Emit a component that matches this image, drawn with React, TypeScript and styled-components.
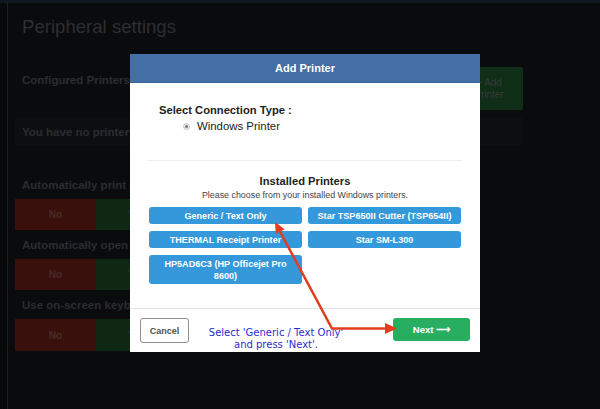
import React from "react";
import styled, { createGlobalStyle } from "styled-components";

const GlobalStyle = createGlobalStyle`
  html, body { margin: 0; padding: 0; background: #0a0b0d; }
  * { box-sizing: border-box; }
`;

const Page = styled.div`
  position: relative;
  width: 600px;
  height: 409px;
  overflow: hidden;
  background: #0a0b0d;
  font-family: "Liberation Sans", Arial, sans-serif;
  display: flex;
  flex-direction: column;
`;

const TopStrip = styled.div`
  height: 3px;
  background: #101822;
  flex: none;
`;

const Main = styled.div`
  flex: 1;
  display: flex;
`;

const Sidebar = styled.div`
  width: 8px;
  flex: none;
  background: #08090b;
  border-right: 1px solid #1c1f23;
`;

const Content = styled.div`
  width: 515px;
  flex: none;
  padding: 13px 0 0 7px;
  display: flex;
  flex-direction: column;
`;

const Title = styled.h1`
  margin: 0;
  padding-left: 7px;
  font-size: 18.6px;
  line-height: 22px;
  font-weight: normal;
  color: #2c2f33;
  white-space: nowrap;
`;

const ConfiguredRow = styled.div`
  margin-top: 29px;
  height: 43px;
  display: flex;
  justify-content: space-between;
  align-items: flex-start;
`;

const DimLabel = styled.div`
  padding-left: 7px;
  font-size: 11.5px;
  font-weight: bold;
  color: #2a2d31;
  white-space: nowrap;
`;

const ConfiguredLabel = styled(DimLabel)`
  padding-top: 7px;
`;

const AddButton = styled.div`
  width: 76px;
  height: 43px;
  background: #0f2d17;
  border-radius: 2px;
  color: #363b39;
  font-size: 10px;
  line-height: 12px;
  display: flex;
  align-items: center;
  justify-content: center;
  text-align: center;
  padding-left: 8px;
`;

const EmptyBox = styled.div`
  margin-top: 8px;
  height: 27px;
  background: #0d0e10;
  display: flex;
  align-items: center;
`;

const SectionLabel = styled(DimLabel)`
  height: 29px;
  display: flex;
  align-items: center;
`;

const FirstSectionLabel = styled(SectionLabel)`
  margin-top: 25px;
`;

const ToggleRow = styled.div<{ $h: number }>`
  display: flex;
  height: ${(p) => p.$h}px;
`;

const Toggle = styled.div<{ $on?: boolean }>`
  width: 81px;
  background: ${(p) => (p.$on ? "#0e2814" : "#3a100d")};
  color: ${(p) => (p.$on ? "#2c372e" : "#4a2a27")};
  font-size: 10px;
  font-weight: bold;
  display: flex;
  align-items: center;
  justify-content: center;
`;

/* ---------- modal ---------- */

const Modal = styled.div`
  position: absolute;
  left: 130px;
  top: 54px;
  width: 350px;
  height: 298px;
  background: #fff;
  display: flex;
  flex-direction: column;
`;

const ModalHeader = styled.div`
  height: 29px;
  flex: none;
  background: #436ea6;
  border-bottom: 1px solid #3b6396;
  color: #fff;
  font-size: 11px;
  font-weight: bold;
  display: flex;
  align-items: center;
  justify-content: center;
`;

const ModalBody = styled.div`
  flex: 1;
  padding: 20px 18px 0 18px;
  display: flex;
  flex-direction: column;
`;

const ConnTitle = styled.div`
  margin-left: 11px;
  font-size: 11.2px;
  line-height: 14px;
  font-weight: bold;
  color: #1e1e1e;
`;

const RadioRow = styled.div`
  margin-top: 2px;
  padding-left: 35px;
  height: 14px;
  display: flex;
  align-items: center;
  gap: 7px;
  font-size: 11.4px;
  color: #222;
`;

const Radio = styled.span`
  width: 7px;
  height: 7px;
  border-radius: 50%;
  background: #e9e9e9;
  border: 1px solid #c4c4c4;
  display: flex;
  align-items: center;
  justify-content: center;
  &::after {
    content: "";
    width: 3px;
    height: 3px;
    border-radius: 50%;
    background: #7a7a7a;
  }
`;

const Divider = styled.hr`
  margin: 27px 0 0 0;
  border: 0;
  border-top: 1px solid #eeeeee;
  height: 0;
`;

const InstalledTitle = styled.div`
  margin-top: 13px;
  text-align: center;
  font-size: 11.2px;
  line-height: 14px;
  font-weight: bold;
  color: #1e1e1e;
`;

const InstalledSub = styled.div`
  margin-top: 1px;
  text-align: center;
  font-size: 8.9px;
  line-height: 12px;
  color: #444;
`;

const PrinterGrid = styled.div`
  margin-top: 6px;
  margin-left: 1px;
  margin-right: 1px;
  display: grid;
  grid-template-columns: 1fr 1fr;
  column-gap: 6px;
  row-gap: 7px;
  align-items: start;
`;

const PrinterButton = styled.div`
  background: #3498db;
  border-radius: 3px;
  color: #fff;
  font-size: 9.1px;
  font-weight: bold;
  line-height: 12px;
  padding: 2.5px 8px;
  text-align: center;
`;

const ModalFooter = styled.div`
  height: 44px;
  flex: none;
  border-top: 1px solid #e3e3e3;
  padding: 9px 10px 0 10px;
  display: flex;
  align-items: flex-start;
`;

const CancelButton = styled.div`
  width: 49px;
  height: 25px;
  border: 1.5px solid #8d8d8d;
  border-radius: 3px;
  background: #fff;
  color: #505050;
  font-size: 9px;
  font-weight: bold;
  display: flex;
  align-items: center;
  justify-content: center;
`;

const Hint = styled.div`
  flex: 1;
  margin-top: 9px;
  padding-right: 30px;
  text-align: center;
  font-family: "DejaVu Sans", Verdana, sans-serif;
  font-size: 10px;
  line-height: 12px;
  color: #2a2ad0;
  white-space: nowrap;
`;

const NextButton = styled.div`
  width: 77px;
  height: 23px;
  border-radius: 3px;
  background: #27ae60;
  color: #fff;
  font-size: 9.6px;
  font-weight: bold;
  display: flex;
  align-items: center;
  justify-content: center;
`;

const ArrowLayer = styled.svg`
  position: absolute;
  left: 0;
  top: 0;
  pointer-events: none;
`;

const printers = [
  "Generic / Text Only",
  "Star TSP650II Cutter (TSP654II)",
  "THERMAL Receipt Printer",
  "Star SM-L300",
  "HP5AD6C3 (HP Officejet Pro 8600)",
];

const toggleSections = [
  { label: "Automatically open cash drawer", h: 31 },
  { label: "Use on-screen keyboard", h: 32 },
];

export default function App() {
  return (
    <>
      <GlobalStyle />
      <Page>
        <TopStrip />
        <Main>
          <Sidebar />
          <Content>
            <Title>Peripheral settings</Title>
            <ConfiguredRow>
              <ConfiguredLabel>Configured Printers</ConfiguredLabel>
              <AddButton>
                + Add
                <br />
                Printer
              </AddButton>
            </ConfiguredRow>
            <EmptyBox>
              <DimLabel>You have no printers configured.</DimLabel>
            </EmptyBox>
            <FirstSectionLabel>Automatically print a receipt after payment</FirstSectionLabel>
            <ToggleRow $h={31}>
              <Toggle>No</Toggle>
              <Toggle $on>Yes</Toggle>
            </ToggleRow>
            {toggleSections.map((s) => (
              <React.Fragment key={s.label}>
                <SectionLabel>{s.label}</SectionLabel>
                <ToggleRow $h={s.h}>
                  <Toggle>No</Toggle>
                  <Toggle $on>Yes</Toggle>
                </ToggleRow>
              </React.Fragment>
            ))}
          </Content>
        </Main>

        <Modal>
          <ModalHeader>Add Printer</ModalHeader>
          <ModalBody>
            <ConnTitle>Select Connection Type :</ConnTitle>
            <RadioRow>
              <Radio />
              Windows Printer
            </RadioRow>
            <Divider />
            <InstalledTitle>Installed Printers</InstalledTitle>
            <InstalledSub>Please choose from your installed Windows printers.</InstalledSub>
            <PrinterGrid>
              {printers.map((p) => (
                <PrinterButton key={p}>{p}</PrinterButton>
              ))}
            </PrinterGrid>
          </ModalBody>
          <ModalFooter>
            <CancelButton>Cancel</CancelButton>
            <Hint>
              Select 'Generic / Text Only'
              <br />
              and press 'Next'.
            </Hint>
            <NextButton>Next ⟶</NextButton>
          </ModalFooter>
        </Modal>

        <ArrowLayer width="600" height="409" viewBox="0 0 600 409">
          <polyline
            points="280,231.5 332,328.5 387,328.5"
            fill="none"
            stroke="#e23d1d"
            strokeWidth="2.5"
            strokeLinejoin="miter"
          />
          <polygon points="275,222 284.6,229.3 275.8,234.1" fill="#e23d1d" />
          <polygon points="397,328.5 385,323 385,334" fill="#e23d1d" />
        </ArrowLayer>
      </Page>
    </>
  );
}
